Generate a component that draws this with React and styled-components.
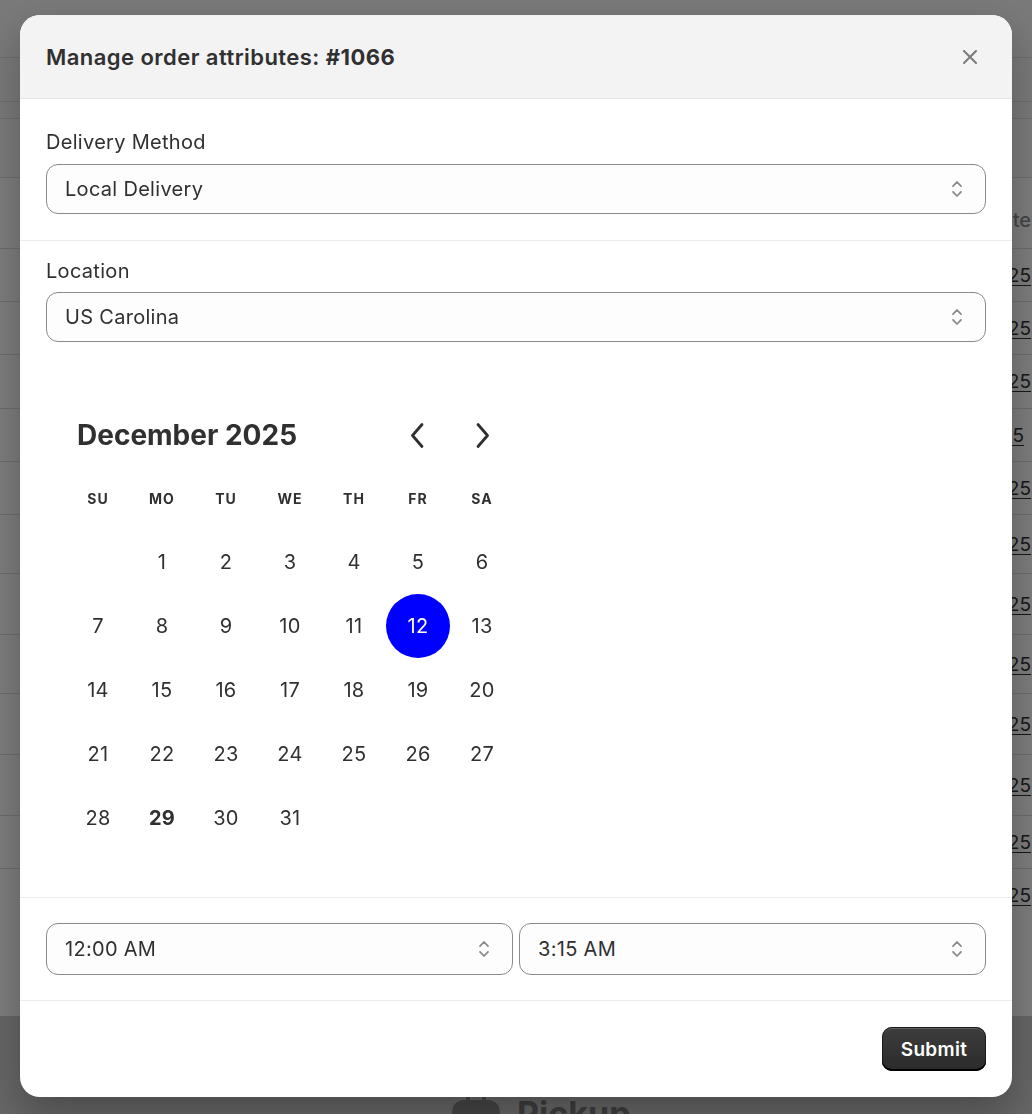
import React from "react";
import styled, { createGlobalStyle } from "styled-components";

const GlobalStyle = createGlobalStyle`
  html, body {
    margin: 0;
    padding: 0;
  }
  body {
    font-family: Inter, "Noto Sans", "Liberation Sans", sans-serif;
    color: #303030;
    background: #f1f1f1;
    overflow: hidden;
  }
  * {
    box-sizing: border-box;
  }
`;

// --- page behind the modal (only its right edge and bottom show) ---

const Page = styled.div`
  height: 1114px;
  display: flex;
  flex-direction: column;
  background: #f3f3f3;
`;

const Bar = styled.div`
  flex-shrink: 0;
  height: ${(p) => p.$h}px;
  border-bottom: 1px solid #dadada;
  background: ${(p) => p.$bg || "transparent"};
`;

const TableHead = styled.div`
  flex-shrink: 0;
  height: 71px;
  border-bottom: 1px solid #dadada;
  display: flex;
  align-items: center;
  justify-content: flex-end;
  padding: 14px 1px 0 0;
  background: #fafafa;
  font-size: 20px;
  font-weight: 500;
  color: #8a8a8a;
`;

const TableRow = styled.div`
  flex-shrink: 0;
  height: ${(p) => p.$h}px;
  border-bottom: ${(p) => (p.$last ? "none" : "1px solid #dadada")};
  display: flex;
  align-items: center;
  justify-content: flex-end;
  padding-right: ${(p) => (p.$short ? 8 : 1)}px;
  background: #fafafa;
  font-size: 19px;
  color: #303030;

  span {
    text-decoration: underline;
    text-underline-offset: 3px;
  }
`;

const TableTail = styled.div`
  flex: 0 0 ${(p) => p.$h}px;
  background: #fafafa;
`;

const EmptyArea = styled.div`
  flex: 1;
  background: #cdcdcd;
  display: flex;
  align-items: flex-start;
  padding: 78px 0 0 452px;
  gap: 17px;
`;

const EmptyTitle = styled.div`
  font-size: 34px;
  font-weight: 700;
  color: #7c7c7c;
  line-height: 40px;
`;

// --- modal ---

const Overlay = styled.div`
  position: fixed;
  inset: 0;
  background: rgba(0, 0, 0, 0.5);
  display: flex;
  justify-content: center;
  align-items: flex-start;
  padding-top: 15px;
`;

const Modal = styled.div`
  width: 992px;
  background: #ffffff;
  border-radius: 20px;
  overflow: hidden;
  box-shadow: 0 18px 40px rgba(0, 0, 0, 0.28);
  display: flex;
  flex-direction: column;
`;

const ModalHeader = styled.div`
  height: 84px;
  background: #f3f3f3;
  border-bottom: 1px solid #e3e3e3;
  display: flex;
  align-items: center;
  justify-content: space-between;
  padding: 0 26px;
`;

const Title = styled.h2`
  margin: 0;
  font-size: 22px;
  font-weight: 600;
  letter-spacing: 0.45px;
  color: #303030;

  b {
    font-weight: 700;
  }
`;

const CloseButton = styled.button`
  width: 32px;
  height: 32px;
  border: 0;
  padding: 0;
  background: transparent;
  display: flex;
  align-items: center;
  justify-content: center;
  color: #7a7a7a;
  cursor: pointer;
`;

const Section = styled.div`
  padding: ${(p) => p.$top}px 26px ${(p) => p.$bottom}px;
  border-bottom: ${(p) => (p.$divider ? "1px solid #ebebeb" : "none")};
`;

const Label = styled.div`
  font-size: 20px;
  line-height: 26px;
  letter-spacing: 0.3px;
  color: #303030;
  margin-bottom: ${(p) => p.$gap}px;
`;

const SelectBox = styled.div`
  height: ${(p) => p.$h || 50}px;
  border: 1px solid #8a8a8a;
  border-radius: 12px;
  background: #fdfdfd;
  display: flex;
  align-items: center;
  justify-content: space-between;
  padding: 0 22px 0 18px;
  font-size: 20px;
  letter-spacing: 0.3px;
  color: #303030;
  cursor: pointer;
`;

const Calendar = styled.div`
  margin-top: 62px;
  padding-left: 20px;
  width: 468px;
`;

const Grid = styled.div`
  display: grid;
  grid-template-columns: repeat(7, 64px);
  grid-auto-rows: 64px;
`;

const HeaderRow = styled(Grid)`
  grid-auto-rows: 62px;
`;

const MonthTitle = styled.div`
  grid-column: 1 / 6;
  padding-left: 11px;
  font-size: 28px;
  font-weight: 700;
  color: #303030;
  line-height: 62px;
`;

const NavButton = styled.button`
  height: 62px;
  border: 0;
  padding: 0;
  background: transparent;
  display: flex;
  align-items: center;
  justify-content: center;
  color: #303030;
  cursor: pointer;
  margin-left: ${(p) => p.$shift || 0}px;
`;

const Weekday = styled.div`
  display: flex;
  align-items: center;
  justify-content: center;
  font-size: 14px;
  font-weight: 700;
  letter-spacing: 1px;
  color: #303030;
`;

const Day = styled.div`
  display: flex;
  align-items: center;
  justify-content: center;
  border-radius: 50%;
  font-size: 20px;
  letter-spacing: 0.3px;
  font-weight: ${(p) => (p.$today ? 700 : 400)};
  color: ${(p) => (p.$selected ? "#ffffff" : "#303030")};
  background: ${(p) => (p.$selected ? "#0000ff" : "transparent")};
  cursor: ${(p) => (p.$empty ? "default" : "pointer")};
`;

const TimeRow = styled.div`
  display: grid;
  grid-template-columns: 1fr 1fr;
  gap: 6px;
`;

const Footer = styled.div`
  display: flex;
  justify-content: flex-end;
  padding: 26px 26px;
`;

const PrimaryButton = styled.button`
  height: 44px;
  min-width: 104px;
  padding: 0 18px;
  border: 0;
  border-radius: 10px;
  font-family: inherit;
  font-size: 19px;
  font-weight: 600;
  letter-spacing: 0.3px;
  color: #ffffff;
  background: linear-gradient(180deg, #3d3d3d 0%, #2b2b2b 100%);
  box-shadow: inset 0 -2px 0 0 #000000, inset 0 0 0 1px #1a1a1a,
    inset 0 2px 0 0 rgba(255, 255, 255, 0.18);
  cursor: pointer;
`;

const Chevrons = () => (
  <svg width="12" height="20" viewBox="0 0 12 20" fill="none">
    <path
      d="M2 7.2 L6 3 L10 7.2 M2 12.8 L6 17 L10 12.8"
      stroke="#8a8a8a"
      strokeWidth="1.8"
      strokeLinecap="round"
      strokeLinejoin="round"
    />
  </svg>
);

const Select = ({ value, height }) => (
  <SelectBox $h={height}>
    <span>{value}</span>
    <Chevrons />
  </SelectBox>
);

const Arrow = ({ dir }) => (
  <svg width="18" height="27" viewBox="0 0 18 27" fill="none">
    <path
      d={dir === "left" ? "M14 2.5 L4.5 13.5 L14 24.5" : "M4 2.5 L13.5 13.5 L4 24.5"}
      stroke="currentColor"
      strokeWidth="2.8"
      strokeLinecap="round"
      strokeLinejoin="round"
    />
  </svg>
);

const CalendarIcon = () => (
  <svg width="48" height="48" viewBox="0 0 48 48">
    <rect x="14" y="0" width="4" height="12" rx="2" fill="#8c8c8c" />
    <rect x="30" y="0" width="4" height="12" rx="2" fill="#8c8c8c" />
    <rect x="0" y="6" width="48" height="42" rx="12" fill="#8c8c8c" />
  </svg>
);

const weekdays = ["SU", "MO", "TU", "WE", "TH", "FR", "SA"];
const days = [null, ...Array.from({ length: 31 }, (_, i) => i + 1)];
const selectedDay = 12;
const today = 29;

const rows = [
  { h: 53 },
  { h: 53 },
  { h: 54 },
  { h: 53, short: true },
  { h: 53 },
  { h: 59 },
  { h: 61 },
  { h: 59 },
  { h: 61 },
  { h: 61 },
  { h: 53 },
  { h: 53, last: true },
];

export default function App() {
  return (
    <>
      <GlobalStyle />
      <Page>
        <Bar $h={58} />
        <Bar $h={44} />
        <Bar $h={17} />
        <Bar $h={59} $bg="#f7f7f7" />
        <TableHead>Date</TableHead>
        {rows.map((r, i) => (
          <TableRow key={i} $h={r.h} $short={r.short} $last={r.last}>
            <span>{r.short ? "Dec 9, 2025" : "Dec 12, 2025"}</span>
          </TableRow>
        ))}
        <TableTail $h={94} />
        <EmptyArea>
          <CalendarIcon />
          <EmptyTitle>Pickup</EmptyTitle>
        </EmptyArea>
      </Page>

      <Overlay>
        <Modal>
          <ModalHeader>
            <Title>
              Manage order attributes: <b>#1066</b>
            </Title>
            <CloseButton aria-label="Close">
              <svg width="14" height="14" viewBox="0 0 14 14">
                <path
                  d="M1 1 L13 13 M13 1 L1 13"
                  stroke="currentColor"
                  strokeWidth="2"
                  strokeLinecap="round"
                />
              </svg>
            </CloseButton>
          </ModalHeader>

          <Section $top={30} $bottom={26} $divider>
            <Label $gap={9}>Delivery Method</Label>
            <Select value="Local Delivery" />
          </Section>

          <Section $top={17} $bottom={47} $divider>
            <Label $gap={8}>Location</Label>
            <Select value="US Carolina" />

            <Calendar>
              <HeaderRow>
                <MonthTitle>December 2025</MonthTitle>
                <NavButton $shift={-2} aria-label="Previous month">
                  <Arrow dir="left" />
                </NavButton>
                <NavButton $shift={2} aria-label="Next month">
                  <Arrow dir="right" />
                </NavButton>
              </HeaderRow>
              <Grid>
                {weekdays.map((w) => (
                  <Weekday key={w}>{w}</Weekday>
                ))}
                {days.map((d, i) =>
                  d === null ? (
                    <Day key={`e${i}`} $empty />
                  ) : (
                    <Day key={d} $selected={d === selectedDay} $today={d === today}>
                      {d}
                    </Day>
                  )
                )}
              </Grid>
            </Calendar>
          </Section>

          <Section $top={25} $bottom={25} $divider>
            <TimeRow>
              <Select value="12:00 AM" height={52} />
              <Select value="3:15 AM" height={52} />
            </TimeRow>
          </Section>

          <Footer>
            <PrimaryButton>Submit</PrimaryButton>
          </Footer>
        </Modal>
      </Overlay>
    </>
  );
}
